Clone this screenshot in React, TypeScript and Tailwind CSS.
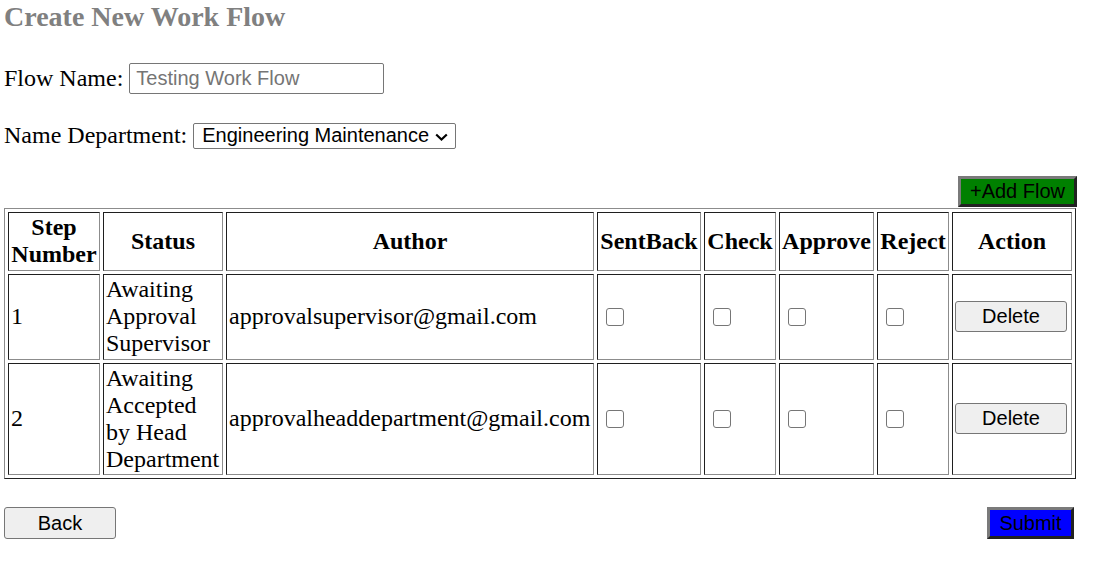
import React from "react";

const cellBase =
  "border border-t-[#1f1f1f] border-l-[#1f1f1f] border-b-[#8c8c8c] border-r-[#8c8c8c] px-[2px] flex items-center";

function Check() {
  return (
    <span className="ml-[6px] mb-[1px] inline-block w-[18px] h-[18px] rounded-[3px] border border-[#767676] bg-white" />
  );
}

function DeleteBtn() {
  return (
    <button className="w-[112px] h-[31px] bg-[#efefef] border border-[#767676] rounded-[3px] font-['Liberation_Sans',Arial,sans-serif] text-[20px] leading-[23px] text-black">
      Delete
    </button>
  );
}

type Row = { step: string; status: string[]; author: string };

const rows: Row[] = [
  { step: "1", status: ["Awaiting", "Approval", "Supervisor"], author: "approvalsupervisor@gmail.com" },
  { step: "2", status: ["Awaiting", "Accepted", "by Head", "Department"], author: "approvalheaddepartment@gmail.com" },
];

export default function App() {
  return (
    <div className="font-['Liberation_Serif','Times_New_Roman',serif] text-[24px] leading-[27px] text-black bg-white pl-[4px] pt-[1px] w-[1107px] min-h-[586px]">
      <h3 className="text-[28px] leading-[31px] font-bold text-[#808080]">Create New Work Flow</h3>

      <div className="mt-[30px] flex items-center h-[32px]">
        <span className="whitespace-nowrap">Flow Name:</span>
        <input
          className="ml-[6px] w-[255px] h-[31px] border border-[#767676] rounded-[2px] px-[6px] font-['Liberation_Sans',Arial,sans-serif] text-[20px] text-black placeholder:text-[#757575] outline-none"
          placeholder="Testing Work Flow"
        />
      </div>

      <div className="mt-[28px] flex items-center h-[27px]">
        <span className="whitespace-nowrap">Name Department:</span>
        <div className="relative ml-[6px] w-[263px] h-[26px] border border-[#767676] rounded-[2px] flex items-center pl-[8px] font-['Liberation_Sans',Arial,sans-serif] text-[20px] leading-[23px] text-black">
          <span className="whitespace-nowrap">Engineering Maintenance</span>
          <svg
            className="absolute right-[7px] top-[9px]"
            width="13"
            height="8"
            viewBox="0 0 13 8"
            fill="none"
            stroke="#000"
            strokeWidth="2.2"
          >
            <path d="M1.2 1.5 L6.5 6.5 L11.8 1.5" />
          </svg>
        </div>
      </div>

      <div className="mt-[27px] w-[1073px] flex justify-end">
        <button className="w-[119px] h-[31px] bg-[#008000] border-[3px] border-t-[#7a7a7a] border-l-[#7a7a7a] border-b-[#222222] border-r-[#222222] font-['Liberation_Sans',Arial,sans-serif] text-[20px] leading-[23px] text-black">
          +Add Flow
        </button>
      </div>

      <div className="mt-[1px] w-[1072px] border border-t-[#8c8c8c] border-l-[#8c8c8c] border-b-[#222222] border-r-[#222222] p-[3px] grid grid-cols-[92px_120px_368px_104px_72px_95px_72px_120px] grid-rows-[59px_86px_112px] gap-[3px]">
        <div className={`${cellBase} justify-center text-center font-bold pb-[1px]`}>
          <span className="whitespace-nowrap">Step<br />Number</span>
        </div>
        {["Status", "Author", "SentBack", "Check", "Approve", "Reject", "Action"].map((h) => (
          <div key={h} className={`${cellBase} justify-center font-bold pb-[1px]`}>
            <span className="whitespace-nowrap">{h}</span>
          </div>
        ))}
        {rows.map((r) => (
          <React.Fragment key={r.step}>
            <div className={`${cellBase} pb-[1px]`}>
              <span>{r.step}</span>
            </div>
            <div className={`${cellBase} pb-[1px]`}>
              <span className="whitespace-nowrap">
                {r.status.map((s, i) => (
                  <React.Fragment key={i}>
                    {i > 0 && <br />}
                    {s}
                  </React.Fragment>
                ))}
              </span>
            </div>
            <div className={`${cellBase} pb-[1px]`}>
              <span className="whitespace-nowrap">{r.author}</span>
            </div>
            <div className={cellBase}><Check /></div>
            <div className={cellBase}><Check /></div>
            <div className={cellBase}><Check /></div>
            <div className={cellBase}><Check /></div>
            <div className={`${cellBase} pb-[1px]`}><DeleteBtn /></div>
          </React.Fragment>
        ))}
      </div>

      <div className="mt-[28px] w-[1070px] flex justify-between items-start">
        <button className="w-[112px] h-[32px] bg-[#efefef] border border-[#767676] rounded-[3px] font-['Liberation_Sans',Arial,sans-serif] text-[20px] leading-[23px] text-black">
          Back
        </button>
        <button className="w-[87px] h-[32px] bg-[#0000ff] border-[3px] border-t-[#7a7a7a] border-l-[#7a7a7a] border-b-[#222222] border-r-[#222222] font-['Liberation_Sans',Arial,sans-serif] text-[20px] leading-[23px] text-black">
          Submit
        </button>
      </div>
    </div>
  );
}
